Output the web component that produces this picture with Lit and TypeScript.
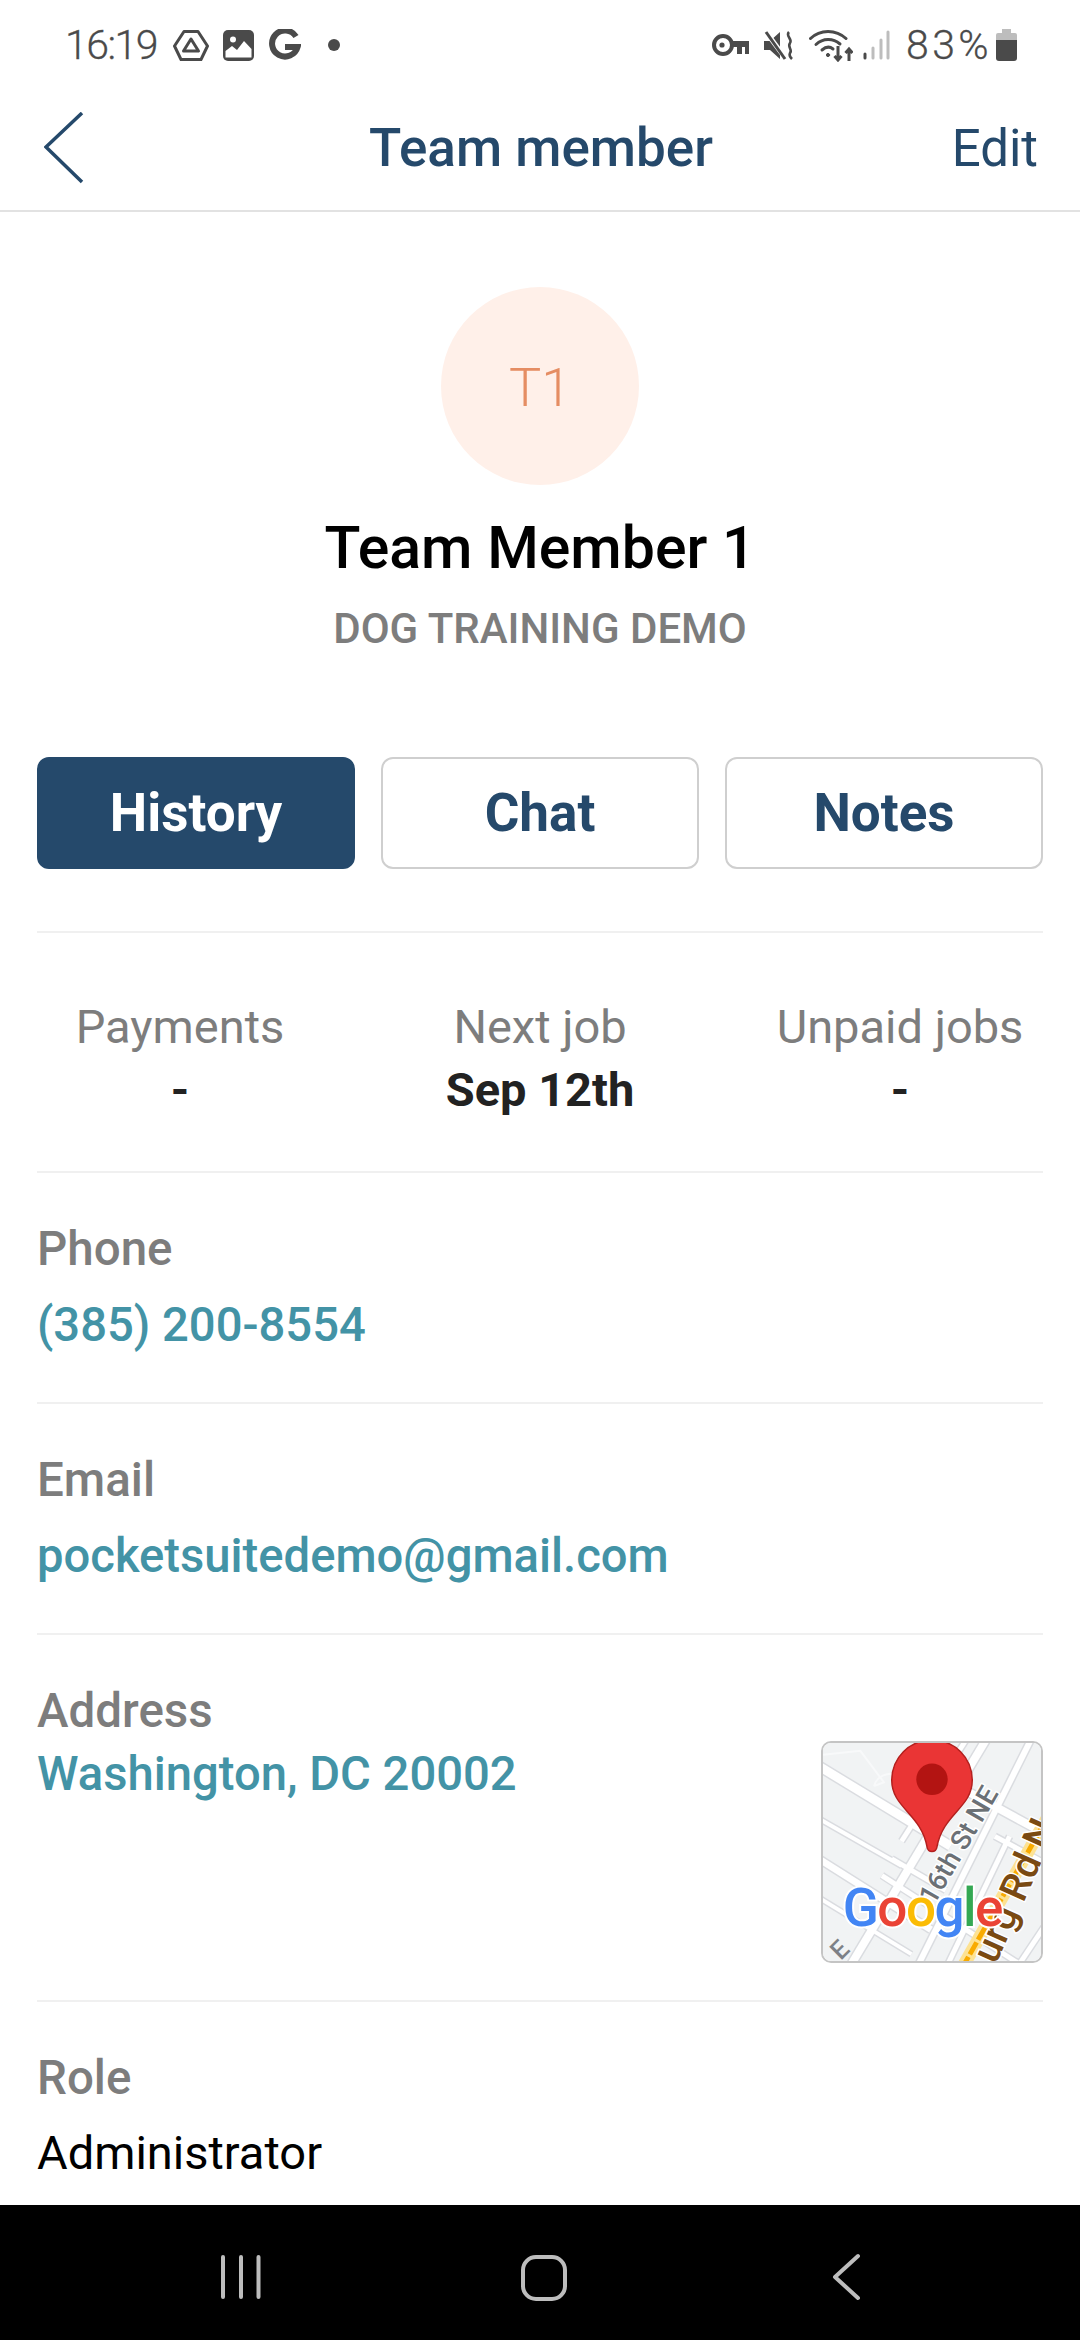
import { LitElement, html, css, svg } from "lit";
import { customElement } from "lit/decorators.js";

const stats = [
  { label: "Payments", value: "-" },
  { label: "Next job", value: "Sep 12th" },
  { label: "Unpaid jobs", value: "-" },
];

const roads: [number, number, number, number, number][] = [
  [-20, 14, 130, 105, 9],
  [-20, 68, 80, 125, 4],
  [-20, 108, 110, 190, 7],
  [-20, 148, 90, 215, 4],
  [70, 118, 125, 150, 5],
  [60, 135, 200, 225, 5],
  [130, 40, 240, 100, 8],
  [175, 95, 240, 130, 5],
  [170, -10, 20, 240, 8],
  [215, -10, 90, 240, 6],
  [150, -10, 80, 100, 5],
  [190, 95, 120, 240, 5],
  [250, 150, 190, 240, 5],
];

const mapArt = svg`
  <rect width="222" height="222" fill="#f1f3f4"></rect>
  ${roads.map(([a, b, c, d, w]) => svg`<line x1=${a} y1=${b} x2=${c} y2=${d} stroke="#dadce0" stroke-width=${w + 3}></line>`)}
  ${roads.map(([a, b, c, d, w]) => svg`<line x1=${a} y1=${b} x2=${c} y2=${d} stroke="#fff" stroke-width=${w}></line>`)}
  <path d="M0 12 L38 8 L62 40 L52 44 M52 44 C56 28 80 26 100 44" fill="none" stroke="#f8f9fa" stroke-width="2"></path>
  <line x1="232" y1="70" x2="140" y2="232" stroke="#fde293" stroke-width="13"></line>
  <line x1="232" y1="70" x2="140" y2="232" stroke="#f9ab00" stroke-width="5" stroke-dasharray="14 3"></line>
  <g font-family="Roboto, sans-serif" font-weight="500">
    <text transform="translate(113 166) rotate(-60)" font-size="28" fill="#6b7075" stroke="#fff" stroke-width="3" paint-order="stroke">16th St NE</text>
    <text transform="translate(176 226) rotate(-66)" font-size="40" fill="#7a4a12" stroke="#fff" stroke-width="3" paint-order="stroke">urg Rd N</text>
    <text transform="translate(18 222) rotate(-45)" font-size="26" fill="#7d8186">E</text>
  </g>
  <path d="M111 -3 C88 -3 70 15 70 38 C70 66 100 72 106 106 C107 112 115 112 116 106 C122 72 152 66 152 38 C152 15 134 -3 111 -3 Z" fill="#ea3535" stroke="#b3201e" stroke-width="1.5"></path>
  <circle cx="111" cy="37" r="16" fill="#b31412"></circle>
  <text x="20" y="186" font-family="Roboto, sans-serif" font-size="54" font-weight="500" letter-spacing="-1.5" stroke="#fff" stroke-width="4" paint-order="stroke"><tspan fill="#4285f4">G</tspan><tspan fill="#ea4335">o</tspan><tspan fill="#fbbc05">o</tspan><tspan fill="#4285f4">g</tspan><tspan fill="#34a853">l</tspan><tspan fill="#ea4335">e</tspan></text>
`;

@customElement("app-root")
export class AppRoot extends LitElement {
  static styles = css`
    :host { display: block; width: 1080px; height: 2340px; background: #fff; font-family: Roboto, sans-serif; }
    .page { height: 2340px; display: flex; flex-direction: column; overflow: hidden; }
    .status { height: 90px; display: flex; align-items: center; justify-content: space-between; padding: 0 63px 0 65px; color: #4a4a4a; flex: none; box-sizing: border-box; }
    .group { display: flex; align-items: center; }
    .status-text { font-size: 41px; font-weight: 300; letter-spacing: -1.5px; line-height: 44px; -webkit-text-stroke: 0.3px #4a4a4a; }
    .status-text.pct { letter-spacing: 3.4px; }
    .status svg { display: block; flex: none; }
    .time { margin-right: 16px; }
    .ml14 { margin-left: 14px; }
    .ml15 { margin-left: 15px; }
    .ml27 { margin-left: 27px; }
    .ml10 { margin-left: 10px; }
    .ml16 { margin-left: 16px; }
    .ml5 { margin-left: 4px; }
    .nav { height: 122px; flex: none; box-sizing: border-box; border-bottom: 2px solid #e2e2e2; display: grid; grid-template-columns: 1fr auto 1fr; align-items: center; padding: 0 42px 4px 44px; color: #25496b; }
    .nav svg { display: block; }
    .title { font-size: 53px; font-weight: 500; }
    .edit { font-size: 51px; font-weight: 400; justify-self: end; }
    .body { flex: 1; min-height: 0; overflow: hidden; }
    .hero { display: flex; flex-direction: column; align-items: center; padding-top: 75px; }
    .avatar { width: 198px; height: 198px; border-radius: 50%; background: #fff0e9; color: #e58d63; display: flex; align-items: center; justify-content: center; font-size: 54px; font-weight: 300; padding-top: 3px; box-sizing: border-box; }
    .name { margin-top: 28px; font-size: 59px; font-weight: 500; line-height: 70px; color: #000; }
    .company { margin-top: 18px; font-size: 42px; font-weight: 500; line-height: 56px; color: #7d7d7d; }
    .tabs { display: grid; grid-template-columns: repeat(3, 1fr); gap: 26px; margin: 100px 37px 0 37px; }
    .tab { height: 112px; box-sizing: border-box; border: 2px solid #cfcfcf; border-radius: 12px; display: flex; align-items: center; justify-content: center; color: #25496b; font-size: 53px; font-weight: 700; }
    .tab.on { background: #25496b; border-color: #25496b; color: #fff; }
    .rule { height: 2px; background: #f0f0f0; margin: 0 37px; }
    .rule.first { margin-top: 62px; }
    .stats { display: grid; grid-template-columns: repeat(3, 1fr); height: 238px; box-sizing: border-box; padding-top: 64px; text-align: center; }
    .stat-label { font-size: 47px; line-height: 60px; color: #7d7d7d; }
    .stat-value { font-size: 47px; font-weight: 700; line-height: 60px; color: #222; margin-top: 3px; }
    .row { height: 229px; padding: 48px 37px 0 37px; box-sizing: border-box; }
    .label { font-size: 47.5px; font-weight: 500; line-height: 56px; color: #7d7d7d; }
    .value { font-size: 47.2px; font-weight: 500; line-height: 56px; color: #4393a6; margin-top: 20px; }
    .address { height: 365px; display: flex; justify-content: space-between; }
    .address .value { margin-top: 7px; }
    .map { width: 222px; height: 222px; margin-top: 58px; box-sizing: border-box; border: 2px solid #c4c4c4; border-radius: 10px; overflow: hidden; flex: none; }
    .map svg { display: block; width: 100%; height: 100%; }
    .value.plain { color: #000; font-size: 47px; font-weight: 400; margin-top: 19px; }
    .softkeys { height: 135px; flex: none; background: #000; display: flex; align-items: flex-start; }
    .softkeys svg { display: block; }
  `;

  render() {
    return html`<div class="page">
      <div class="status">
        <div class="group">
          <span class="status-text time">16:19</span>
          <svg width="36" height="31" viewBox="0 0 36 31" fill="none" stroke="#4a4a4a" stroke-linejoin="round"><path d="M11 1.5H25L34.5 16L28 29.5H8L1.5 16Z" stroke-width="3"></path><path d="M18 9L25.5 21H10.5Z" stroke-width="3"></path></svg>
          <svg class="ml14" width="31" height="31" viewBox="0 0 31 31"><rect width="31" height="31" rx="5" fill="#4a4a4a"></rect><circle cx="10" cy="9.5" r="3" fill="#fff"></circle><path d="M2.5 27.5V21L9 16L14 20L21 11L28.5 19V27.5Z" fill="#fff"></path></svg>
          <svg class="ml15" width="32" height="32" viewBox="0 0 32 32" fill="none"><path d="M27 7.5A13 13 0 1 0 28.6 18H16" stroke="#4a4a4a" stroke-width="6"></path></svg>
          <svg class="ml27" width="12" height="12" viewBox="0 0 12 12"><circle cx="6" cy="6" r="6" fill="#4a4a4a"></circle></svg>
        </div>
        <div class="group">
          <svg width="37" height="22" viewBox="0 0 37 22" fill="none"><circle cx="11" cy="11" r="9" stroke="#4a4a4a" stroke-width="4"></circle><circle cx="10" cy="11" r="2.6" fill="#4a4a4a"></circle><path d="M19 7H37V20H33V13H30V20H25V13H19Z" fill="#4a4a4a"></path></svg>
          <svg class="ml15" width="30" height="29" viewBox="0 0 30 29" fill="none"><path d="M0 10H6L16 1V28L6 19H0Z" fill="#4a4a4a"></path><path d="M2 1L22 28" stroke="#fff" stroke-width="5"></path><path d="M2 1L21 28" stroke="#4a4a4a" stroke-width="3"></path><path d="M25 1C21 5 29 8 26 12C23 16 29 19 26 22C25 24 26 26 28 28" stroke="#4a4a4a" stroke-width="2.6"></path></svg>
          <svg class="ml15" width="44" height="33" viewBox="0 0 44 33" fill="none" stroke="#4a4a4a" stroke-width="3" stroke-linecap="round"><path d="M1.5 9.5C11 0 27 0 37 9.5"></path><path d="M7 15.5C14 9 24 9 31 15"></path><path d="M13 21C17 17.5 21 17.5 24 20"></path><circle cx="19" cy="26" r="1.6" fill="#4a4a4a" stroke-width="1"></circle><path d="M29 17V30M25.5 27L29 31L32.5 27" stroke-linecap="butt"></path><path d="M40 32V20M36.5 24L40 20L43.5 24" stroke-linecap="butt"></path></svg>
          <svg class="ml10" width="27" height="30" viewBox="0 0 27 30" fill="none" stroke-width="3" stroke-linecap="round"><path d="M2 24V28" stroke="#4a4a4a"></path><path d="M10 18V28" stroke="#bdbdbd"></path><path d="M18 10V28" stroke="#bdbdbd"></path><path d="M25 2V28" stroke="#bdbdbd"></path></svg>
          <span class="status-text pct ml16">83%</span>
          <svg class="ml5" width="21" height="32" viewBox="0 0 21 32"><path d="M6 0H15V4H19Q21 4 21 6V11H0V6Q0 4 2 4H6Z" fill="#bdbdbd"></path><path d="M0 11H21V29Q21 32 18 32H3Q0 32 0 29Z" fill="#4a4a4a"></path></svg>
        </div>
      </div>

      <div class="nav">
        <svg width="40" height="72" viewBox="0 0 40 72" fill="none" stroke="#25496b" stroke-width="3.5"><path d="M38 1L2 35L38 70"></path></svg>
        <div class="title">Team member</div>
        <div class="edit">Edit</div>
      </div>

      <div class="body">
        <div class="hero">
          <div class="avatar">T1</div>
          <div class="name">Team Member 1</div>
          <div class="company">DOG TRAINING DEMO</div>
        </div>

        <div class="tabs">
          <div class="tab on">History</div>
          <div class="tab">Chat</div>
          <div class="tab">Notes</div>
        </div>

        <div class="rule first"></div>
        <div class="stats">
          ${stats.map((s) => html`<div><div class="stat-label">${s.label}</div><div class="stat-value">${s.value}</div></div>`)}
        </div>

        <div class="rule"></div>
        <div class="row"><div class="label">Phone</div><div class="value">(385) 200-8554</div></div>
        <div class="rule"></div>
        <div class="row"><div class="label">Email</div><div class="value">pocketsuitedemo@gmail.com</div></div>
        <div class="rule"></div>
        <div class="row address">
          <div><div class="label">Address</div><div class="value">Washington, DC 20002</div></div>
          <div class="map"><svg viewBox="0 0 222 222">${mapArt}</svg></div>
        </div>
        <div class="rule"></div>
        <div class="row"><div class="label">Role</div><div class="value plain">Administrator</div></div>
      </div>

      <div class="softkeys">
        <svg width="1080" height="135" viewBox="0 0 1080 135" fill="none" stroke="#bdbdbd" stroke-width="4" stroke-linecap="round" stroke-linejoin="round">
          <path d="M223 52V92M241 52V92M258.5 52V92"></path>
          <rect x="523" y="52" width="42" height="42" rx="13"></rect>
          <path d="M858 51L835 72L858 93"></path>
        </svg>
      </div>
    </div>`;
  }
}
